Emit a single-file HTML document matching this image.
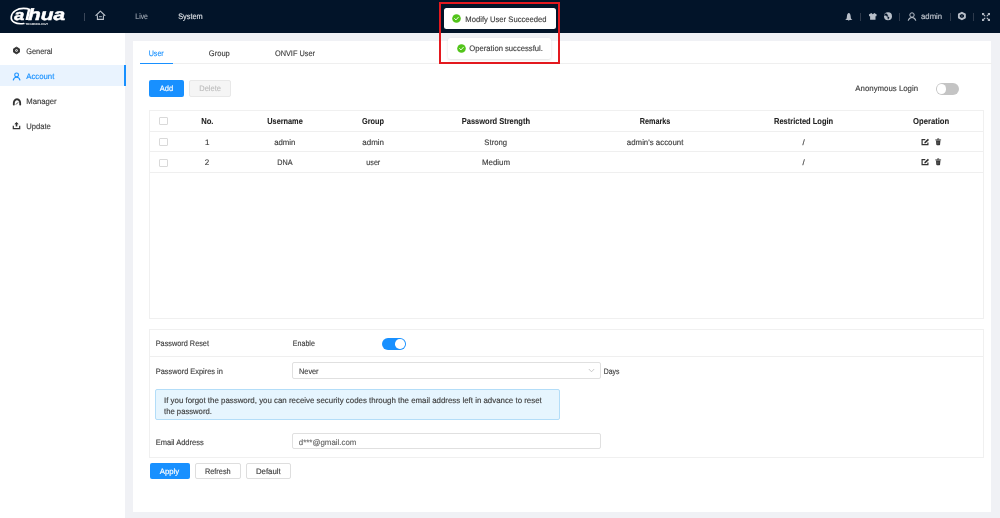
<!DOCTYPE html>
<html><head><meta charset="utf-8">
<style>
*{margin:0;padding:0;box-sizing:border-box}
html,body{width:1000px;height:518px;overflow:hidden;background:#f0f1f5;font-family:"Liberation Sans",sans-serif;color:#333}
.a{position:absolute;white-space:nowrap}
#hdr{position:absolute;left:0;top:0;width:1000px;height:32.5px;background:#021429}
#side{position:absolute;left:0;top:32.5px;width:125px;height:486px;background:#fff}
#card{position:absolute;left:133px;top:41px;width:858.4px;height:470.5px;background:#fff}
.t{font-size:7.5px;line-height:10px;color:#333}
.b{font-weight:bold}
.c{text-align:center;width:200px}
.btn{position:absolute;border-radius:2px;font-size:7.5px;text-align:center}
.line{position:absolute;background:#efefef}
</style></head><body>
<div id="hdr"></div>
<div id="side"></div>
<div id="card"></div>

<!-- header content -->
<div class="a" style="left:84px;top:12.5px;width:1px;height:8px;background:#3a4658"></div>

<!-- sidebar -->
<div class="a" style="left:0;top:65px;width:125px;height:21px;background:#e9f3fe"></div>
<div class="a" style="left:123.5px;top:65px;width:2px;height:21px;background:#1890ff"></div>

<!-- tabs -->
<div class="line" style="left:140px;top:63px;width:852px;height:1px;background:#efefef"></div>
<div class="a" style="left:140px;top:62.8px;width:32.5px;height:1.6px;background:#1890ff"></div>

<!-- toolbar -->
<div class="btn" style="left:149.3px;top:80px;width:34.5px;height:16.5px;background:#1890ff;color:#fff;line-height:17.5px"></div>
<div class="btn" style="left:189.2px;top:80px;width:41.8px;height:16.5px;background:#f5f5f5;border:1px solid #e8e8e8;color:#c0c0c0;line-height:16px"></div>

<!-- table -->
<div class="a" style="left:149px;top:110px;width:835px;height:208.5px;border:1px solid #f0f0f0"></div>
<div class="line" style="left:150px;top:130.5px;width:833px;height:1px"></div>
<div class="line" style="left:150px;top:151px;width:833px;height:1px"></div>
<div class="line" style="left:150px;top:171.7px;width:833px;height:1px"></div>

<!-- section -->
<div class="a" style="left:149px;top:329px;width:835px;height:128.5px;border:1px solid #f0f0f0"></div>
<div class="line" style="left:150px;top:356px;width:833px;height:1px"></div>
<div class="a" style="left:292px;top:362.3px;width:308.5px;height:16.3px;border:1px solid #e0e0e0;border-radius:2px"></div>
<div class="a" style="left:155px;top:389.2px;width:404.7px;height:31.2px;background:#e6f5fe;border:1px solid #b3ddf8;border-radius:2px"></div>
<div class="a" style="left:292px;top:433.3px;width:308.5px;height:16.1px;border:1px solid #e0e0e0;border-radius:2px"></div>

<div class="btn" style="left:149.7px;top:463px;width:40px;height:16.3px;background:#1890ff;color:#fff;line-height:17.2px"></div>
<div class="btn" style="left:195px;top:463px;width:45.6px;height:16.3px;border:1px solid #dedede;color:#333;line-height:16.2px"></div>
<div class="btn" style="left:246px;top:463px;width:45.2px;height:16.3px;border:1px solid #dedede;color:#333;line-height:16.2px"></div>


<!-- logo -->
<svg class="a" style="left:0;top:0;will-change:transform" width="80" height="32" viewBox="0 0 80 32" text-rendering="geometricPrecision">
  <path d="M23.8 23.5 C15.5 24.6 10.6 21.5 11.3 16.6 C12 11.6 17.5 8.4 23.5 8.4 C26.5 8.4 28.6 9 29.6 9.6" fill="none" stroke="#fff" stroke-width="1.7" stroke-linecap="round"/>
  <text x="0" y="0" font-family="Liberation Sans" font-weight="bold" font-style="italic" font-size="14.8" fill="#fff" stroke="#fff" stroke-width="0.5" transform="translate(14.3,19.9) scale(1.22,1)">a</text>
  <path d="M27.9 9.3 L30.4 9.6 L28 20 L25.4 20 Z" fill="#fff"/>
  <text x="0" y="0" font-family="Liberation Sans" font-weight="bold" font-style="italic" font-size="16.3" fill="#fff" stroke="#fff" stroke-width="0.5" transform="translate(28,20) scale(1.28,1)">hua</text>
  <text x="25.3" y="24.9" font-family="Liberation Sans" font-weight="bold" font-size="2.9" fill="#fff" textLength="23" lengthAdjust="spacingAndGlyphs">TECHNOLOGY</text>
</svg>
<!-- home icon -->
<svg class="a" style="left:95px;top:10px" width="11" height="11" viewBox="0 0 11 11">
  <path d="M0.9 5.5 L5.4 1.1 L9.9 5.5" fill="none" stroke="#b9c0ca" stroke-width="1.1" stroke-linecap="round" stroke-linejoin="round"/>
  <path d="M2.4 5.2 V9.4 H8.4 V5.2" fill="none" stroke="#b9c0ca" stroke-width="1.1"/>
  <path d="M4 6.7 H6.9" stroke="#b9c0ca" stroke-width="0.9"/>
</svg>
<!-- right header icons -->
<svg class="a" style="left:844px;top:11.5px" width="10" height="10" viewBox="0 0 10 10">
  <path d="M4.8 0.9 C3.7 1.1 3.1 2.3 3 3.8 L2.7 6.3 C2.5 7 1.9 7.5 1.1 7.9 L8.5 7.9 C7.7 7.5 7.1 7 6.9 6.3 L6.6 3.8 C6.5 2.3 5.9 1.1 4.8 0.9 Z M4 8.2 H5.6 L4.8 9 Z" fill="#b8bfc9"/>
</svg>
<div class="a" style="left:860.2px;top:12.5px;width:0.8px;height:8.3px;background:#2e3a4c"></div>
<svg class="a" style="left:868px;top:12px" width="10" height="10" viewBox="0 0 10 10">
  <path d="M0.9 2.4 L3.3 1.1 L4.8 2.2 L6.3 1.1 L8.7 2.4 L8.4 4.3 L7.5 4.3 L7.5 7.8 L2.1 7.8 L2.1 4.3 L1.2 4.3 Z" fill="#b8bfc9"/>
</svg>
<svg class="a" style="left:883px;top:12px" width="10" height="10" viewBox="0 0 10 10">
  <circle cx="5" cy="4.3" r="4" fill="#b8bfc9"/>
  <path d="M1.6 2.6 L2.9 1.5 L4.1 2.2 L5.0 4.2 L3.9 4.4 L2.9 3.3 L1.5 3.4 Z M4.7 5.1 L6.1 5.0 L5.7 6.6 L5.0 7.2 Z" fill="#021429" stroke="#021429" stroke-width="0.4" stroke-linejoin="round"/>
</svg>
<div class="a" style="left:899px;top:12.5px;width:0.8px;height:8.3px;background:#2e3a4c"></div>
<svg class="a" style="left:906.5px;top:12px" width="10" height="10" viewBox="0 0 10 10">
  <circle cx="5" cy="3" r="2.2" fill="none" stroke="#b8bfc9" stroke-width="1"/>
  <path d="M1.3 8.3 C2 6.3 3.3 5.4 5 5.4 C6.7 5.4 8 6.3 8.7 8.3" fill="none" stroke="#b8bfc9" stroke-width="1.05" stroke-linecap="round"/>
</svg>
<div class="a" style="left:950px;top:12.5px;width:0.8px;height:8.3px;background:#2e3a4c"></div>
<svg class="a" style="left:957px;top:11.3px" width="10" height="10" viewBox="0 0 10 10">
  <path d="M4.9 1.8 L7.9 3.45 L7.9 6.55 L4.9 8.2 L1.9 6.55 L1.9 3.45 Z" fill="none" stroke="#b8bfc9" stroke-width="1.9" stroke-linejoin="round"/>
  <circle cx="4.9" cy="5" r="0.8" fill="#5d6673"/>
</svg>
<div class="a" style="left:973.2px;top:12.5px;width:0.8px;height:8.3px;background:#2e3a4c"></div>
<svg class="a" style="left:980.5px;top:11.5px" width="10" height="10" viewBox="0 0 10 10">
  <path d="M1.8 1.8 L3.9 3.9 M8.2 1.8 L6.1 3.9 M1.8 8.2 L3.9 6.1 M8.2 8.2 L6.1 6.1" stroke="#b8bfc9" stroke-width="1.1" stroke-linecap="round"/>
  <path d="M1 1 H3.6 L1 3.6 Z M9 1 H6.4 L9 3.6 Z M1 9 H3.6 L1 6.4 Z M9 9 H6.4 L9 6.4 Z" fill="#b8bfc9"/>
</svg>

<!-- sidebar icons -->
<svg class="a" style="left:12px;top:46px" width="9" height="9" viewBox="0 0 9 9">
  <path d="M4.5 1.2 L7.4 2.85 L7.4 6.15 L4.5 7.8 L1.6 6.15 L1.6 2.85 Z" fill="#333" stroke="#333" stroke-width="1" stroke-linejoin="round"/>
  <circle cx="4.5" cy="4.5" r="1.2" fill="#fff"/><circle cx="4.5" cy="4.5" r="0.5" fill="#333"/>
</svg>
<svg class="a" style="left:12px;top:71.5px" width="9" height="9" viewBox="0 0 9 9">
  <circle cx="4.6" cy="2.9" r="1.9" fill="none" stroke="#1890ff" stroke-width="1.1"/>
  <path d="M1.3 8 C1.8 6.1 3 5.2 4.6 5.2 C6.2 5.2 7.4 6.1 7.9 8" fill="none" stroke="#1890ff" stroke-width="1.1" stroke-linecap="round"/>
</svg>
<svg class="a" style="left:11.5px;top:97px" width="10" height="9" viewBox="0 0 10 9">
  <path d="M1.8 7.6 C1.4 4.6 2.9 2.3 5 2.3 C7.1 2.3 8.6 4.6 8.2 7.6" fill="none" stroke="#333" stroke-width="1.9" stroke-linecap="round"/>
  <path d="M4.2 7.3 L5.8 5.6" stroke="#333" stroke-width="0.9" stroke-linecap="round"/>
</svg>
<svg class="a" style="left:12px;top:121px" width="9" height="9" viewBox="0 0 9 9">
  <path d="M4.5 1 L2.3 3.3 H3.7 V5.6 H5.3 V3.3 H6.7 Z" fill="#333"/>
  <path d="M1.3 4.8 V7.6 H7.7 V4.8" fill="none" stroke="#333" stroke-width="1.2"/>
</svg>

<!-- toolbar toggle -->
<div class="a" style="left:935.7px;top:83.2px;width:23.3px;height:11.6px;border-radius:6px;background:#c4c4c4"></div>
<div class="a" style="left:936.9px;top:84.25px;width:9.5px;height:9.5px;border-radius:50%;background:#fff"></div>

<!-- table header -->
<!-- rows -->
<!-- checkboxes -->
<div class="a" style="left:159.4px;top:117px;width:8.3px;height:8.2px;border:0.8px solid #d9d9d9;border-radius:1px"></div>
<div class="a" style="left:159.4px;top:137.8px;width:8.3px;height:8.2px;border:0.8px solid #d9d9d9;border-radius:1px"></div>
<div class="a" style="left:159.4px;top:158.6px;width:8.3px;height:8.2px;border:0.8px solid #d9d9d9;border-radius:1px"></div>
<!-- op icons -->
<svg class="a" style="left:920.5px;top:137.5px" width="22" height="9" viewBox="0 0 22 9">
  <path d="M4.3 1.7 H1.1 V6.7 H6.9 V4.4" fill="none" stroke="#333" stroke-width="1.2"/>
  <path d="M3.2 5.3 L3.5 4.1 L6.9 0.8 L8 1.9 L4.6 5.2 Z" fill="#333"/>
  <path d="M15 2.5 H19.4 L19.1 6.6 Q19 7.3 18.3 7.3 H16.1 Q15.4 7.3 15.3 6.6 Z" fill="#333"/>
  <path d="M14.3 1.9 H20.1" stroke="#333" stroke-width="0.9"/>
  <path d="M16.5 1.5 V0.8 H17.9 V1.5" stroke="#333" stroke-width="0.8" fill="none"/>
  <path d="M16.6 3.6 V6.3 M17.8 3.6 V6.3" stroke="#777" stroke-width="0.45"/>
</svg>
<svg class="a" style="left:920.5px;top:158px" width="22" height="9" viewBox="0 0 22 9">
  <path d="M4.3 1.7 H1.1 V6.7 H6.9 V4.4" fill="none" stroke="#333" stroke-width="1.2"/>
  <path d="M3.2 5.3 L3.5 4.1 L6.9 0.8 L8 1.9 L4.6 5.2 Z" fill="#333"/>
  <path d="M15 2.5 H19.4 L19.1 6.6 Q19 7.3 18.3 7.3 H16.1 Q15.4 7.3 15.3 6.6 Z" fill="#333"/>
  <path d="M14.3 1.9 H20.1" stroke="#333" stroke-width="0.9"/>
  <path d="M16.5 1.5 V0.8 H17.9 V1.5" stroke="#333" stroke-width="0.8" fill="none"/>
  <path d="M16.6 3.6 V6.3 M17.8 3.6 V6.3" stroke="#777" stroke-width="0.45"/>
</svg>

<!-- enable toggle -->
<div class="a" style="left:382px;top:338.1px;width:23.6px;height:11.7px;border-radius:6px;background:#1890ff"></div>
<div class="a" style="left:395px;top:339.2px;width:9.5px;height:9.5px;border-radius:50%;background:#fff"></div>
<!-- chevron -->
<svg class="a" style="left:588px;top:367.5px" width="7" height="5" viewBox="0 0 7 5">
  <path d="M0.8 1 L3.5 3.8 L6.2 1" fill="none" stroke="#bbb" stroke-width="0.8"/>
</svg>

<svg class="a" style="left:0;top:0;will-change:transform" width="1000" height="518" font-family="Liberation Sans" text-rendering="geometricPrecision">
<text transform="translate(135.35,19.30) scale(0.8520,1)" font-size="8.0" fill="#9ea6b2" stroke="#9ea6b2" stroke-width="0.15">Live</text>
<text transform="translate(178.15,19.30) scale(0.9186,1)" font-size="8.0" fill="#dde1e6" stroke="#dde1e6" stroke-width="0.15">System</text>
<text transform="translate(921.05,18.90) scale(0.9682,1)" font-size="8.0" fill="#c3c8d0" stroke="#c3c8d0" stroke-width="0.15">admin</text>
<text transform="translate(26.25,53.90) scale(0.9205,1)" font-size="8.0" fill="#3d3d3d" stroke="#3d3d3d" stroke-width="0.15">General</text>
<text transform="translate(26.25,78.90) scale(0.9722,1)" font-size="8.0" fill="#1890ff" stroke="#1890ff" stroke-width="0.15">Account</text>
<text transform="translate(26.25,103.90) scale(0.9628,1)" font-size="8.0" fill="#3d3d3d" stroke="#3d3d3d" stroke-width="0.15">Manager</text>
<text transform="translate(26.25,128.90) scale(0.9535,1)" font-size="8.0" fill="#3d3d3d" stroke="#3d3d3d" stroke-width="0.15">Update</text>
<text transform="translate(148.65,56.05) scale(0.8941,1)" font-size="8.0" fill="#1890ff" stroke="#1890ff" stroke-width="0.15">User</text>
<text transform="translate(208.85,56.05) scale(0.9401,1)" font-size="8.0" fill="#3d3d3d" stroke="#3d3d3d" stroke-width="0.15">Group</text>
<text transform="translate(274.95,56.05) scale(0.9183,1)" font-size="8.0" fill="#3d3d3d" stroke="#3d3d3d" stroke-width="0.15">ONVIF User</text>
<text transform="translate(159.85,91.10) scale(0.9415,1)" font-size="8.0" fill="#ffffff" stroke="#ffffff" stroke-width="0.15">Add</text>
<text transform="translate(199.25,91.10) scale(0.9383,1)" font-size="8.0" fill="#bdbdbd" stroke="#bdbdbd" stroke-width="0.15">Delete</text>
<text transform="translate(855.35,91.30) scale(0.9791,1)" font-size="8.0" fill="#3d3d3d" stroke="#3d3d3d" stroke-width="0.15">Anonymous Login</text>
<text transform="translate(201.15,123.70) scale(0.8878,1)" font-size="8.6" fill="#222" font-weight="bold" stroke="#222" stroke-width="0.08">No.</text>
<text transform="translate(267.25,123.70) scale(0.8536,1)" font-size="8.6" fill="#222" font-weight="bold" stroke="#222" stroke-width="0.08">Username</text>
<text transform="translate(361.95,123.70) scale(0.8566,1)" font-size="8.6" fill="#222" font-weight="bold" stroke="#222" stroke-width="0.08">Group</text>
<text transform="translate(461.75,123.70) scale(0.8715,1)" font-size="8.6" fill="#222" font-weight="bold" stroke="#222" stroke-width="0.08">Password Strength</text>
<text transform="translate(639.85,123.70) scale(0.8394,1)" font-size="8.6" fill="#222" font-weight="bold" stroke="#222" stroke-width="0.08">Remarks</text>
<text transform="translate(774.05,123.70) scale(0.8710,1)" font-size="8.6" fill="#222" font-weight="bold" stroke="#222" stroke-width="0.08">Restricted Login</text>
<text transform="translate(913.05,123.70) scale(0.8888,1)" font-size="8.6" fill="#222" font-weight="bold" stroke="#222" stroke-width="0.08">Operation</text>
<text transform="translate(205.03,144.50) scale(1.0000,1)" font-size="8.0" fill="#3d3d3d" stroke="#3d3d3d" stroke-width="0.15">1</text>
<text transform="translate(274.15,144.50) scale(0.9728,1)" font-size="8.0" fill="#3d3d3d" stroke="#3d3d3d" stroke-width="0.15">admin</text>
<text transform="translate(362.35,144.50) scale(0.9958,1)" font-size="8.0" fill="#3d3d3d" stroke="#3d3d3d" stroke-width="0.15">admin</text>
<text transform="translate(484.35,144.50) scale(0.9632,1)" font-size="8.0" fill="#3d3d3d" stroke="#3d3d3d" stroke-width="0.15">Strong</text>
<text transform="translate(626.85,144.50) scale(0.9816,1)" font-size="8.0" fill="#3d3d3d" stroke="#3d3d3d" stroke-width="0.15">admin&#39;s account</text>
<text transform="translate(802.54,144.50) scale(1.0000,1)" font-size="8.0" fill="#3d3d3d" stroke="#3d3d3d" stroke-width="0.15">/</text>
<text transform="translate(204.78,165.30) scale(1.0000,1)" font-size="8.0" fill="#3d3d3d" stroke="#3d3d3d" stroke-width="0.15">2</text>
<text transform="translate(277.35,165.30) scale(0.9060,1)" font-size="8.0" fill="#3d3d3d" stroke="#3d3d3d" stroke-width="0.15">DNA</text>
<text transform="translate(366.35,165.30) scale(0.8933,1)" font-size="8.0" fill="#3d3d3d" stroke="#3d3d3d" stroke-width="0.15">user</text>
<text transform="translate(481.95,165.30) scale(0.9875,1)" font-size="8.0" fill="#3d3d3d" stroke="#3d3d3d" stroke-width="0.15">Medium</text>
<text transform="translate(802.54,165.30) scale(1.0000,1)" font-size="8.0" fill="#3d3d3d" stroke="#3d3d3d" stroke-width="0.15">/</text>
<text transform="translate(155.75,345.60) scale(0.9133,1)" font-size="8.0" fill="#3d3d3d" stroke="#3d3d3d" stroke-width="0.15">Password Reset</text>
<text transform="translate(292.85,345.60) scale(0.8831,1)" font-size="8.0" fill="#3d3d3d" stroke="#3d3d3d" stroke-width="0.15">Enable</text>
<text transform="translate(155.75,373.85) scale(0.9259,1)" font-size="8.0" fill="#3d3d3d" stroke="#3d3d3d" stroke-width="0.15">Password Expires in</text>
<text transform="translate(299.05,373.85) scale(0.9136,1)" font-size="8.0" fill="#3d3d3d" stroke="#3d3d3d" stroke-width="0.15">Never</text>
<text transform="translate(603.65,373.85) scale(0.8615,1)" font-size="8.0" fill="#3d3d3d" stroke="#3d3d3d" stroke-width="0.15">Days</text>
<text transform="translate(164.05,402.50) scale(0.9853,1)" font-size="8.0" fill="#3d3d3d" stroke="#3d3d3d" stroke-width="0.15">If you forgot the password, you can receive security codes through the email address left in advance to reset</text>
<text transform="translate(164.05,413.50) scale(0.9597,1)" font-size="8.0" fill="#3d3d3d" stroke="#3d3d3d" stroke-width="0.15">the password.</text>
<text transform="translate(155.75,445.10) scale(0.9367,1)" font-size="8.0" fill="#3d3d3d" stroke="#3d3d3d" stroke-width="0.15">Email Address</text>
<text transform="translate(298.75,445.20) scale(0.9887,1)" font-size="8.0" fill="#666" stroke="#666" stroke-width="0.15">d***@gmail.com</text>
<text transform="translate(159.75,474.20) scale(0.9746,1)" font-size="8.0" fill="#ffffff" stroke="#ffffff" stroke-width="0.15">Apply</text>
<text transform="translate(204.95,474.20) scale(0.9176,1)" font-size="8.0" fill="#3d3d3d" stroke="#3d3d3d" stroke-width="0.15">Refresh</text>
<text transform="translate(255.95,474.20) scale(0.9746,1)" font-size="8.0" fill="#3d3d3d" stroke="#3d3d3d" stroke-width="0.15">Default</text>
</svg>
<!-- toasts -->
<div class="a" style="left:438.8px;top:2.3px;width:121.3px;height:61.6px;border:2.8px solid #e3191f"></div>
<div class="a" style="left:444.3px;top:7.7px;width:111.4px;height:21.7px;background:#fff;border-radius:2.5px"></div>
<svg class="a" style="left:452px;top:14.3px" width="9" height="9" viewBox="0 0 9 9">
  <circle cx="4.5" cy="4.5" r="4.3" fill="#52c41a"/>
  <path d="M2.6 4.6 L4 5.9 L6.4 3.2" fill="none" stroke="#fff" stroke-width="0.9" stroke-linecap="round" stroke-linejoin="round"/>
</svg>
<div class="a" style="left:448.2px;top:37.5px;width:103.3px;height:21.3px;background:#fff;border-radius:2.5px;box-shadow:0 1px 3px rgba(0,0,0,0.12)"></div>
<svg class="a" style="left:456.6px;top:43.8px" width="9" height="9" viewBox="0 0 9 9">
  <circle cx="4.5" cy="4.5" r="4.3" fill="#52c41a"/>
  <path d="M2.6 4.6 L4 5.9 L6.4 3.2" fill="none" stroke="#fff" stroke-width="0.9" stroke-linecap="round" stroke-linejoin="round"/>
</svg>



<svg class="a" style="left:0;top:0;will-change:transform" width="1000" height="518" font-family="Liberation Sans" text-rendering="geometricPrecision">
<text transform="translate(465.35,21.50) scale(0.9561,1)" font-size="8.0" fill="#3d3d3d" stroke="#3d3d3d" stroke-width="0.15">Modify User Succeeded</text>
<text transform="translate(469.35,50.90) scale(0.9554,1)" font-size="8.0" fill="#3d3d3d" stroke="#3d3d3d" stroke-width="0.15">Operation successful.</text>
</svg>
</body></html>
